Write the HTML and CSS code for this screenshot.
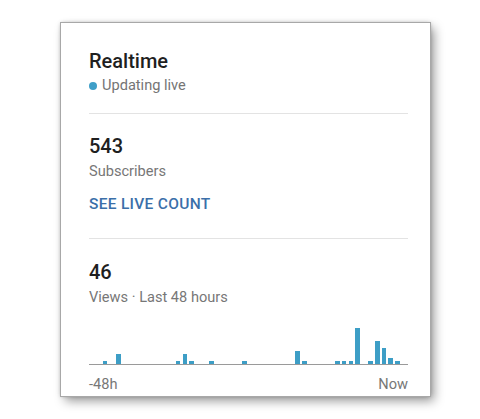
FILE: index.html
```html
<!DOCTYPE html>
<html>
<head>
<meta charset="utf-8">
<link rel="stylesheet" href="styles.css">
</head>
<body>
<div class="card">
  <div class="title">Realtime</div>
  <div class="live"><span class="dot"></span>Updating live</div>
  <div class="divider first"></div>
  <div class="num">543</div>
  <div class="label">Subscribers</div>
  <div class="link">SEE LIVE COUNT</div>
  <div class="divider second"></div>
  <div class="num">46</div>
  <div class="label">Views · Last 48 hours</div>
  <div class="chart" id="chart">
    <div class="slot"></div><div class="slot"></div><div class="slot"><div class="bar" style="height:3px"></div></div><div class="slot"></div><div class="slot"><div class="bar" style="height:10px"></div></div><div class="slot"></div><div class="slot"></div><div class="slot"></div><div class="slot"></div><div class="slot"></div><div class="slot"></div><div class="slot"></div><div class="slot"></div><div class="slot"><div class="bar" style="height:3px"></div></div><div class="slot"><div class="bar" style="height:10px"></div></div><div class="slot"><div class="bar" style="height:3px"></div></div><div class="slot"></div><div class="slot"></div><div class="slot"><div class="bar" style="height:3px"></div></div><div class="slot"></div><div class="slot"></div><div class="slot"></div><div class="slot"></div><div class="slot"><div class="bar" style="height:3px"></div></div><div class="slot"></div><div class="slot"></div><div class="slot"></div><div class="slot"></div><div class="slot"></div><div class="slot"></div><div class="slot"></div><div class="slot"><div class="bar" style="height:13px"></div></div><div class="slot"><div class="bar" style="height:3px"></div></div><div class="slot"></div><div class="slot"></div><div class="slot"></div><div class="slot"></div><div class="slot"><div class="bar" style="height:3px"></div></div><div class="slot"><div class="bar" style="height:3px"></div></div><div class="slot"><div class="bar" style="height:3px"></div></div><div class="slot"><div class="bar" style="height:36px"></div></div><div class="slot"></div><div class="slot"><div class="bar" style="height:3px"></div></div><div class="slot"><div class="bar" style="height:23px"></div></div><div class="slot"><div class="bar" style="height:16px"></div></div><div class="slot"><div class="bar" style="height:6px"></div></div><div class="slot"><div class="bar" style="height:3px"></div></div><div class="slot"></div>
  </div>
  <div class="axis"><span>-48h</span><span>Now</span></div>
</div>
</body>
</html>
```
FILE: styles.css
```css
* { box-sizing: border-box; }
html, body { margin: 0; padding: 0; background: #ffffff; }
body { font-family: Roboto, "Noto Sans", sans-serif; width: 480px; height: 419px; overflow: hidden; }
.card {
  margin: 23px 0 0 61px;
  width: 369px;
  height: 373px;
  background: #ffffff;
  padding: 26px 22px 0 28px;
  box-shadow: 0 0 0 1px #a8a8a8, 0 0 4px rgba(0,0,0,0.3), 4px 5px 10px rgba(0,0,0,0.4);
}
.title { font-size: 20px; line-height: 24px; font-weight: 500; color: #1f1f1f; }
.live { font-size: 14.6px; line-height: 20px; color: #757575; display: flex; align-items: center; margin-top: 2px; }
.dot { width: 8px; height: 8px; border-radius: 50%; background: #3f9fc8; margin: 1px 5px 0 0; }
.divider { height: 1px; background: #e3e3e3; }
.divider.first { margin: 18px 0 20px; }
.divider.second { margin: 24px 0 21px; }
.num { font-size: 20px; line-height: 24px; font-weight: 500; color: #1f1f1f; }
.label { font-size: 14.6px; line-height: 20px; color: #777777; margin-top: 3px; }
.link { font-size: 15.5px; line-height: 20px; font-weight: 500; letter-spacing: 0.3px; color: #3b6fa9; margin-top: 13px; }
.chart { display: flex; align-items: flex-end; height: 58px; border-bottom: 1px solid #9a9a9a; }
.slot { flex: 1; display: flex; justify-content: center; padding-right: 1px; }
.bar { width: 4.5px; background: #3d9ec6; }
.axis { display: flex; justify-content: space-between; font-size: 14.6px; line-height: 20px; color: #777777; margin-top: 9px; }
```
